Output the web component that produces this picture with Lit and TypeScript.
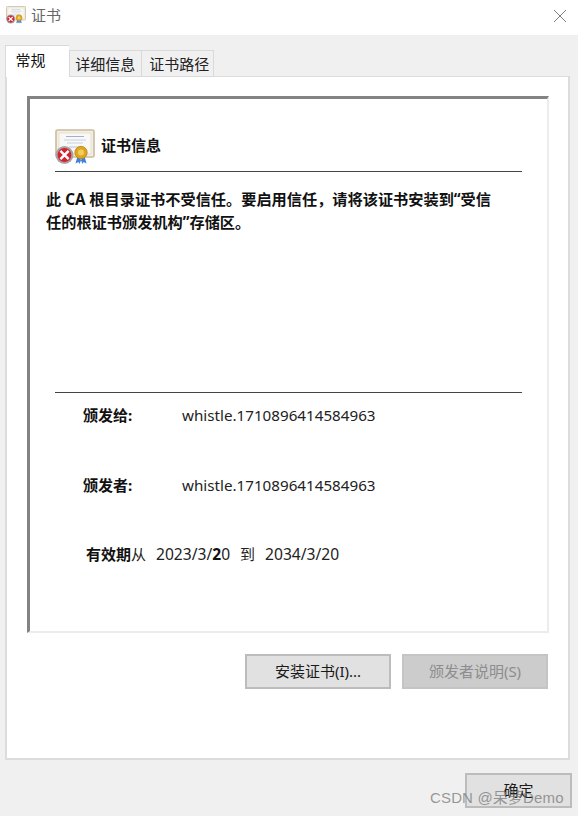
import { LitElement, html, css, svg } from "lit";
import { customElement } from "lit/decorators.js";

const certIcon = (size: number) => html`<svg class="cert" width=${size} height=${size} viewBox="0 0 40 36">
  ${svg`
  <rect x="1" y="1" width="38" height="27" rx="1.5" fill="#f4efe2" stroke="#c9bc9f" stroke-width="1.6"/>
  <rect x="4" y="4" width="32" height="21" fill="#f8f8f6" stroke="#e3dccb" stroke-width="0.8"/>
  <path d="M11 7.5h18" stroke="#9fb0d0" stroke-width="1"/>
  <path d="M9 11h22M12 14h16" stroke="#c5cddd" stroke-width="0.9"/>
  <path d="M14 18h12" stroke="#aeb9d2" stroke-width="0.9"/>
  <path d="M22.5 27l-2 7.5 3-1.5 1 2 2-5zM29.5 27l2 7.5-3-1.5-1 2-2-5z" fill="#3f7fe0"/>
  <circle cx="26" cy="23.5" r="6.2" fill="#e0a51f" stroke="#b98614" stroke-width="0.8"/>
  <circle cx="26" cy="23.5" r="3" fill="#f3cd5d"/>
  <circle cx="9.5" cy="26" r="9" fill="#a4a4a4"/>
  <circle cx="9.5" cy="26" r="6.9" fill="#d2232f"/>
  <path d="M6.3 22.8l6.4 6.4M12.7 22.8l-6.4 6.4" stroke="#fff" stroke-width="2.5" stroke-linecap="square"/>
  `}
</svg>`;

@customElement("app-root")
export class AppRoot extends LitElement {
  static styles = css`
    :host {
      display: block;
      position: relative;
      width: 578px;
      height: 816px;
      overflow: hidden;
      background: #f0f0f0;
      font-family: "Noto Sans", "Noto Sans CJK SC", sans-serif;
      font-size: 15px;
      color: #1a1a1a;
    }
    .titlebar {
      height: 35px;
      background: #fff;
      display: flex;
      align-items: center;
      padding: 0 11px 0 6px;
      gap: 5px;
    }
    .title {
      flex: 1;
      font-size: 15px;
      color: #666;
      line-height: 30px;
      margin-top: -6px;
    }
    .titlebar .cert {
      margin-top: -5px;
    }
    .close {
      margin-top: -4px;
    }
    .body {
      padding: 11px 8px 0 5px;
    }
    .tabs {
      display: flex;
      align-items: flex-end;
      height: 31px;
      position: relative;
      z-index: 1;
      margin-bottom: -1px;
    }
    .tab {
      box-sizing: border-box;
      height: 27px;
      width: 72.5px;
      border: 1px solid #d9d9d9;
      background: #f0f0f0;
      text-align: center;
      line-height: 26px;
      font-size: 15px;
      color: #222;
    }
    .tab + .tab {
      border-left: none;
    }
    .tab + .tab + .tab {
      padding-left: 4px;
    }
    .tab.active {
      height: 32px;
      width: 64px;
      background: #fff;
      border-bottom: none;
      border-right: none;
      line-height: 28px;
      padding-right: 14px;
      color: #111;
      position: relative;
      z-index: 2;
    }
    .tab.active + .tab {
      border-left: 1px solid #d9d9d9;
    }
    .panel {
      box-sizing: border-box;
      height: 684px;
      background: #fff;
      border: 2px solid #dcdcdc;
      border-top-width: 1px;
      padding: 19px 19px 0 20px;
    }
    .inner {
      box-sizing: border-box;
      height: 537px;
      border-top: 3px solid #838383;
      border-left: 3px solid #838383;
      border-right: 2px solid #ececec;
      border-bottom: 2px solid #ececec;
      padding: 0 25px;
      display: flex;
      flex-direction: column;
    }
    .head {
      display: flex;
      align-items: center;
      gap: 6px;
      height: 73px;
      padding-top: 24px;
      box-sizing: border-box;
      border-bottom: 1.5px solid #444;
    }
    .head-title {
      font-weight: 700;
      font-size: 15px;
      color: #111;
      margin-top: -5px;
    }
    .msg {
      margin: 16px 0 0 -9px;
      width: 450px;
      height: 204px;
      font-weight: 700;
      font-size: 15.2px;
      line-height: 23px;
      color: #111;
    }
    .divider {
      border-top: 1.5px solid #444;
      height: 0;
    }
    .row {
      display: flex;
      align-items: center;
      height: 24px;
      font-size: 15.2px;
      color: #222;
      padding-left: 28px;
    }
    .row.first {
      margin-top: 9.5px;
    }
    .row.second {
      margin-top: 46px;
    }
    .key {
      width: 99px;
      font-weight: 700;
      font-size: 15px;
      color: #111;
    }
    .dates {
      display: flex;
      align-items: center;
      gap: 10px;
      height: 24px;
      margin-top: 45px;
      padding-left: 31px;
      font-size: 15px;
      color: #222;
      white-space: pre;
    }
    .dates b {
      font-weight: 700;
      color: #111;
    }
    .date {
      font-size: 15.6px;
    }
    .actions {
      display: flex;
      justify-content: flex-end;
      gap: 11px;
      margin: 21px 1px 0 0;
    }
    .btn {
      box-sizing: border-box;
      width: 146px;
      height: 35px;
      padding-bottom: 3px;
      background: #e1e1e1;
      border: 2px solid #bcbcbc;
      font-size: 15px;
      color: #1a1a1a;
      display: flex;
      align-items: center;
      justify-content: center;
    }
    .btn.off {
      background: #cccccc;
      border-color: #c4c4c4;
      color: #8d8d8d;
    }
    .footer {
      display: flex;
      justify-content: flex-end;
      padding: 13px 6px 0 0;
    }
    .btn.ok {
      width: 107px;
    }
    .mark {
      position: absolute;
      left: 430px;
      top: 788px;
      font-family: "Liberation Sans", "Noto Sans CJK SC", sans-serif;
      font-size: 15px;
      line-height: 20px;
      color: rgba(120, 120, 120, 0.75);
      letter-spacing: 0.15px;
      white-space: nowrap;
    }
  `;

  render() {
    return html`
      <div class="titlebar">
        ${certIcon(20)}
        <div class="title">证书</div>
        <svg class="close" width="14" height="14" viewBox="0 0 14 14">
          <path d="M1 1l12 12M13 1L1 13" stroke="#7d7d7d" stroke-width="1" fill="none"/>
        </svg>
      </div>
      <div class="body">
        <div class="tabs">
          <div class="tab active">常规</div>
          <div class="tab">详细信息</div>
          <div class="tab">证书路径</div>
        </div>
        <div class="panel">
          <div class="inner">
            <div class="head">
              ${certIcon(40)}
              <div class="head-title">证书信息</div>
            </div>
            <div class="msg">此 CA 根目录证书不受信任。要启用信任，请将该证书安装到“受信任的根证书颁发机构”存储区。</div>
            <div class="divider"></div>
            <div class="row first"><div class="key">颁发给:</div><div>whistle.1710896414584963</div></div>
            <div class="row second"><div class="key">颁发者:</div><div>whistle.1710896414584963</div></div>
            <div class="dates"><span><b>有效期</b>从</span><span class="date">2023/3/<b>2</b>0</span><span>到</span><span class="date">2034/3/20</span></div>
          </div>
          <div class="actions">
            <div class="btn">安装证书(I)...</div>
            <div class="btn off">颁发者说明(S)</div>
          </div>
        </div>
      </div>
      <div class="footer"><div class="btn ok">确定</div></div>
      <div class="mark">CSDN @呆萝Demo</div>
    `;
  }
}
